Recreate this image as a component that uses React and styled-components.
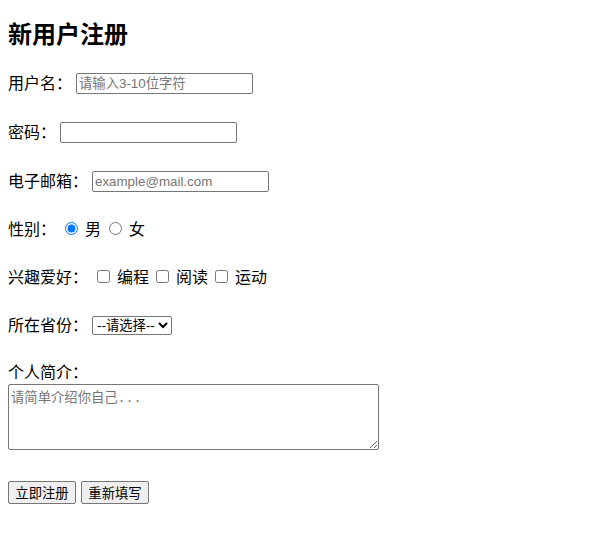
import React from "react";
import styled, { createGlobalStyle } from "styled-components";

const GlobalStyle = createGlobalStyle`
  body {
    margin: 0;
    background: #fff;
    color: #000;
    font-family: "Noto Sans CJK SC", "Liberation Sans", sans-serif;
    font-size: 16px;
  }
`;

const Page = styled.div`
  padding: 17px 8px 0;
`;

const Title = styled.h2`
  margin: 0 0 20px;
  font-size: 24px;
  line-height: 32px;
  font-weight: 700;
`;

const Form = styled.form`
  display: flex;
  flex-direction: column;
  gap: 24px;
`;

const Row = styled.div`
  display: flex;
  align-items: center;
  height: ${(p) => (p.tall ? 25 : 24)}px;
  line-height: 24px;
`;

const Label = styled.span`
  margin-right: 4px;
`;

const TextInput = styled.input`
  box-sizing: border-box;
  width: 177px;
  height: 21px;
  margin-top: 4px;
  padding: 1px 2px;
  border: 1px solid #767676;
  border-radius: 2px;
  font-family: "Liberation Sans", "Noto Sans CJK SC", sans-serif;
  font-size: 13.33px;
  &::placeholder {
    color: #757575;
  }
`;

const Choice = styled.label`
  display: inline-flex;
  align-items: center;
  margin-right: 3px;
`;

const Radio = styled.input`
  width: 13px;
  height: 13px;
  margin: 0 7px 0 ${(p) => (p.first ? 9 : 5)}px;
  accent-color: #0075ff;
`;

const Check = styled.input`
  width: 13px;
  height: 13px;
  margin: 0 7px 0 ${(p) => (p.first ? 9 : 4)}px;
`;

const Select = styled.select`
  box-sizing: border-box;
  width: 80px;
  height: 19px;
  margin-top: 2px;
  border: 1px solid #767676;
  border-radius: 2px;
  background: #fff;
  font-family: "Liberation Sans", "Noto Sans CJK SC", sans-serif;
  font-size: 13.33px;
  padding: 0;
`;

const Bio = styled.div`
  display: flex;
  flex-direction: column;
  gap: 2px;
`;

const BioLabel = styled.span`
  line-height: 22px;
`;

const TextArea = styled.textarea`
  box-sizing: border-box;
  width: 371px;
  height: 66px;
  padding: 2px;
  border: 1px solid #767676;
  border-radius: 2px;
  font-family: "Liberation Mono", "Noto Sans CJK SC", monospace;
  font-size: 13.33px;
  &::placeholder {
    color: #757575;
  }
`;

const Actions = styled.div`
  display: flex;
  gap: 5px;
  margin-top: 7px;
`;

const Button = styled.button`
  box-sizing: border-box;
  width: 68px;
  height: 23px;
  padding: 1px 6px;
  border: 1px solid #767676;
  border-radius: 2px;
  background: #efefef;
  color: #000;
  font-family: "Noto Sans CJK SC", "Liberation Sans", sans-serif;
  font-size: 13.33px;
  line-height: 19px;
`;

export default function App() {
  return (
    <>
      <GlobalStyle />
      <Page>
        <Title>新用户注册</Title>
        <Form onSubmit={(e) => e.preventDefault()}>
          <Row tall>
            <Label>用户名：</Label>
            <TextInput type="text" placeholder="请输入3-10位字符" />
          </Row>
          <Row tall>
            <Label>密码：</Label>
            <TextInput type="password" />
          </Row>
          <Row tall>
            <Label>电子邮箱：</Label>
            <TextInput type="email" placeholder="example@mail.com" />
          </Row>
          <Row>
            <span>性别：</span>
            <Choice>
              <Radio first type="radio" name="gender" defaultChecked />男
            </Choice>
            <Choice>
              <Radio type="radio" name="gender" />女
            </Choice>
          </Row>
          <Row>
            <span>兴趣爱好：</span>
            <Choice>
              <Check first type="checkbox" />编程
            </Choice>
            <Choice>
              <Check type="checkbox" />阅读
            </Choice>
            <Choice>
              <Check type="checkbox" />运动
            </Choice>
          </Row>
          <Row>
            <Label>所在省份：</Label>
            <Select defaultValue="">
              <option value="">--请选择--</option>
              <option value="bj">北京</option>
              <option value="sh">上海</option>
              <option value="gd">广东</option>
            </Select>
          </Row>
          <Bio>
            <BioLabel>个人简介：</BioLabel>
            <TextArea placeholder="请简单介绍你自己..." />
          </Bio>
          <Actions>
            <Button type="submit">立即注册</Button>
            <Button type="reset">重新填写</Button>
          </Actions>
        </Form>
      </Page>
    </>
  );
}
